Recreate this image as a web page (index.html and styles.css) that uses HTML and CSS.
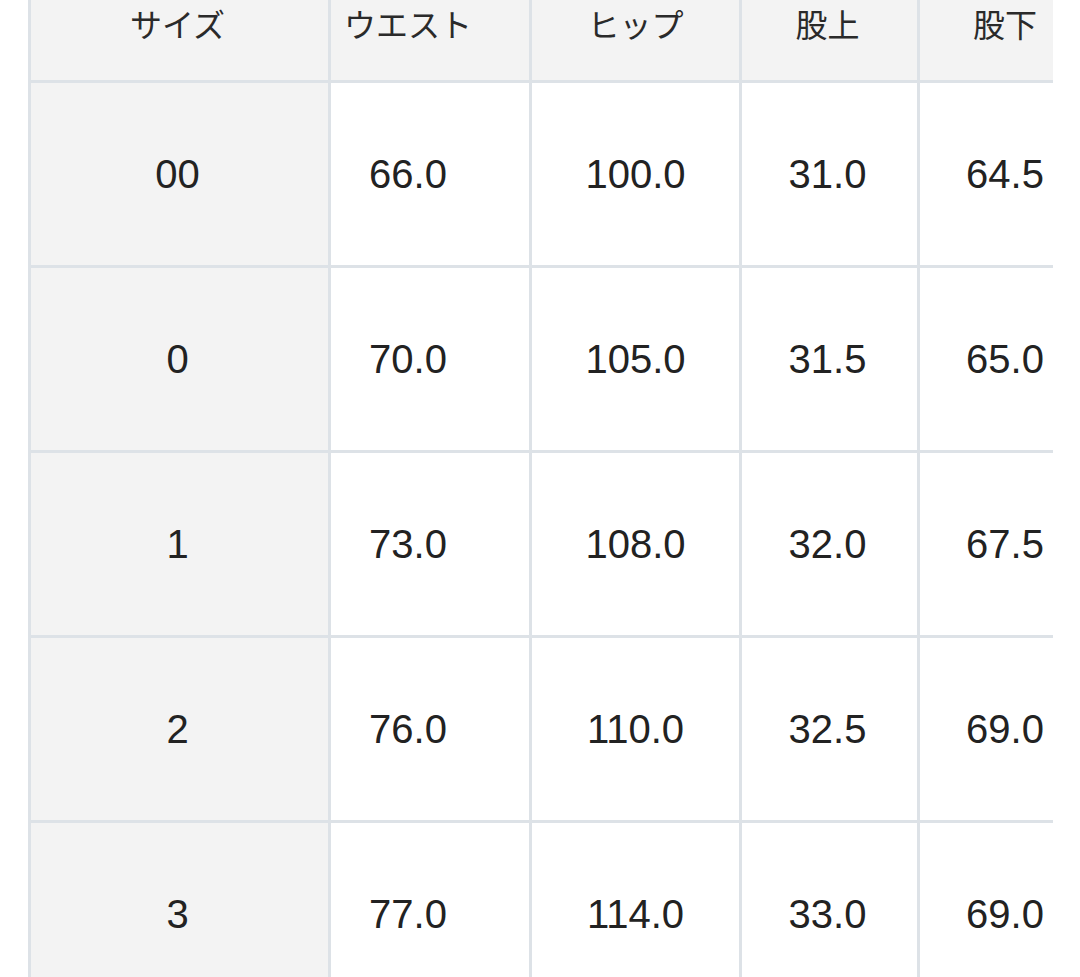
FILE: index.html
```html
<!DOCTYPE html>
<html lang="ja">
<head>
<meta charset="utf-8">
<link rel="stylesheet" href="styles.css">
<title>サイズ表</title>
</head>
<body>
<div class="table-clip">
  <div class="size-table">
    <div class="cell head c1">サイズ</div>
    <div class="cell head c2">ウエスト</div>
    <div class="cell head c3">ヒップ</div>
    <div class="cell head c4">股上</div>
    <div class="cell head c5">股下</div>

    <div class="cell size c1">00</div>
    <div class="cell c2">66.0</div>
    <div class="cell c3">100.0</div>
    <div class="cell c4">31.0</div>
    <div class="cell c5">64.5</div>

    <div class="cell size c1">0</div>
    <div class="cell c2">70.0</div>
    <div class="cell c3">105.0</div>
    <div class="cell c4">31.5</div>
    <div class="cell c5">65.0</div>

    <div class="cell size c1">1</div>
    <div class="cell c2">73.0</div>
    <div class="cell c3">108.0</div>
    <div class="cell c4">32.0</div>
    <div class="cell c5">67.5</div>

    <div class="cell size c1">2</div>
    <div class="cell c2">76.0</div>
    <div class="cell c3">110.0</div>
    <div class="cell c4">32.5</div>
    <div class="cell c5">69.0</div>

    <div class="cell size c1">3</div>
    <div class="cell c2">77.0</div>
    <div class="cell c3">114.0</div>
    <div class="cell c4">33.0</div>
    <div class="cell c5">69.0</div>
  </div>
</div>
</body>
</html>
```

FILE: styles.css
```css
html, body {
  margin: 0;
  padding: 0;
  background: #ffffff;
  overflow: hidden;
}

body {
  width: 1080px;
  height: 977px;
}

.table-clip {
  width: 1025px;
  margin-left: 28px;
  overflow: hidden;
}

.size-table {
  display: grid;
  grid-template-columns: 297px 198px 207px 175px 170px;
  grid-template-rows: 80px repeat(5, 182px);
  gap: 3px;
  padding-left: 3px;
  width: max-content;
  background: #dde2e7;
}

.cell {
  display: flex;
  align-items: center;
  justify-content: center;
  box-sizing: border-box;
  background: #ffffff;
  color: #222222;
  font-family: "Liberation Sans", Arial, sans-serif;
  font-size: 40px;
  line-height: 1.15;
}

.cell.head {
  align-items: flex-start;
  padding-top: 0;
  background: #f3f3f3;
  font-family: "Noto Sans CJK JP", sans-serif;
  font-size: 32px;
  line-height: normal;
  color: #2a2a2a;
}

.cell.size {
  background: #f3f3f3;
}

.c1 {
  padding-right: 4px;
}

.c2 {
  padding-right: 44px;
}

.c4 {
  padding-right: 4px;
}
```
